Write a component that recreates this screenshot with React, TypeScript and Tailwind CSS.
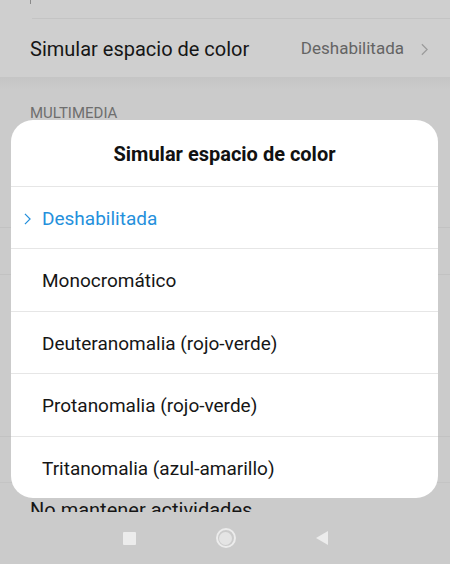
const OPTIONS = [
  "Deshabilitada",
  "Monocromático",
  "Deuteranomalia (rojo-verde)",
  "Protanomalia (rojo-verde)",
  "Tritanomalia (azul-amarillo)",
];

function Chevron({ className }: { className?: string }) {
  return (
    <svg viewBox="0 0 8 14" className={className} fill="none" stroke="currentColor" strokeWidth="1.4">
      <path d="M1 1l6 6-6 6" />
    </svg>
  );
}

function NavBar() {
  return (
    <div className="h-[52px] shrink-0 bg-[#cbcbcb] flex items-center justify-center gap-[80px]">
      <div className="size-[13px] bg-[#ececec] rounded-[1px]" />
      <div className="size-[20px] rounded-full border-2 border-[#ececec] flex items-center justify-center">
        <div className="size-[13px] rounded-full bg-[#e4e4e4]" />
      </div>
      <svg viewBox="0 0 12 14" className="w-[12px] h-[14px]">
        <path d="M12 0v14L0 7z" fill="#ececec" />
      </svg>
    </div>
  );
}

function Background() {
  return (
    <div className="flex-1 overflow-hidden flex flex-col text-[#161616]">
      <div className="h-[18px] shrink-0 bg-[#cfcfcf] pl-[30px]">
        <div className="w-px h-[4px] bg-[#8a8a8a]" />
      </div>
      <div className="h-[59px] shrink-0 bg-[#cfcfcf] flex flex-col">
        <div className="h-px ml-[32px] bg-[#c4c4c4]" />
        <div className="flex-1 flex items-center pl-[30px] pr-[22px] pt-[2px]">
          <span className="flex-1 text-[20px]">Simular espacio de color</span>
          <span className="text-[17px] text-[#646464]">Deshabilitada</span>
          <Chevron className="w-[7px] h-[13px] ml-[17px] text-[#9b9b9b]" />
        </div>
      </div>
      <div className="h-[12px] shrink-0 bg-gradient-to-b from-[#c5c5c5] to-[#cbcbcb]" />
      <div className="h-[36px] shrink-0 flex items-end pl-[30px] pb-[1px] text-[15px] text-[#6e6e6e]">MULTIMEDIA</div>
      <div className="h-[103px] shrink-0 border-b border-[#c2c2c2]" />
      <div className="h-[47px] shrink-0 border-b border-[#c2c2c2]" />
      <div className="h-[162px] shrink-0 border-b border-[#c2c2c2]" />
      <div className="h-[46px] shrink-0 border-b border-[#c4c4c4]" />
      <div className="h-[40px] shrink-0 pl-[30px] pt-[15px] text-[20px] leading-[24px]">No mantener actividades</div>
    </div>
  );
}

export default function App() {
  return (
    <div
      className="relative w-[450px] h-[564px] overflow-hidden bg-[#cbcbcb] flex flex-col"
      style={{ fontFamily: "Roboto, 'Noto Sans', sans-serif" }}
    >
      <Background />
      <NavBar />

      <div className="absolute left-[11px] top-[120px] w-[427px] h-[378px] bg-white rounded-[22px] flex flex-col overflow-hidden">
        <div className="h-[67px] shrink-0 flex items-center justify-center pt-[2px] border-b border-[#e6e6e6]">
          <span className="text-[20px] font-bold text-[#111]">Simular espacio de color</span>
        </div>
        {OPTIONS.map((o, i) => (
          <div
            key={o}
            className={`flex-1 flex items-center relative pl-[31px] pt-[3px] text-[19px] ${
              i < OPTIONS.length - 1 ? "border-b border-[#e6e6e6]" : ""
            } ${i === 0 ? "text-[#2590dc]" : "text-[#161616]"}`}
          >
            {i === 0 && (
              <Chevron className="absolute left-[13px] w-[7px] h-[12px] text-[#2590dc]" />
            )}
            {o}
          </div>
        ))}
      </div>
    </div>
  );
}
